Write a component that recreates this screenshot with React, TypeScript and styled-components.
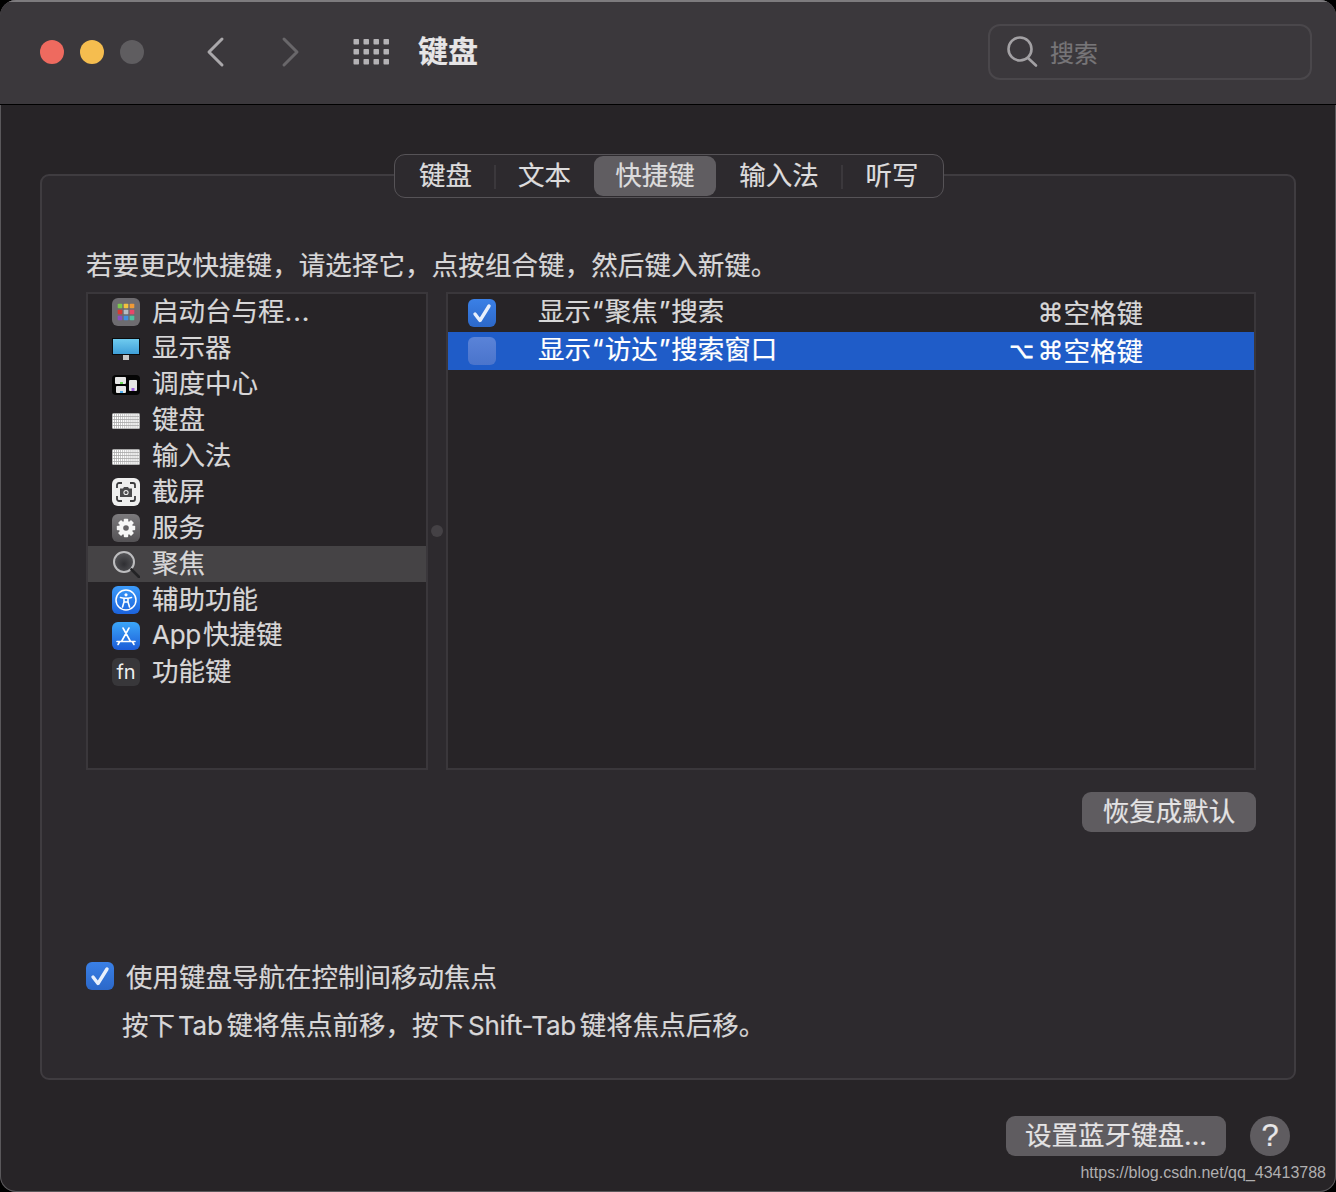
import React from "react";
import styled, { createGlobalStyle } from "styled-components";

const FONT = `Inter, "Noto Sans CJK SC", "Noto Sans", sans-serif`;

const Global = createGlobalStyle`
  html, body { margin: 0; padding: 0; background: #000; }
  body { font-family: ${FONT}; }
  * { box-sizing: border-box; }
`;

const Win = styled.div`
  position: relative;
  width: 1336px;
  height: 1192px;
  background: #272427;
  border-radius: 16px;
  overflow: hidden;
  box-shadow: inset 0 0 0 1px #5a585b;
  display: flex;
  flex-direction: column;
  -webkit-text-stroke: 0.2px;
`;
const TitleBar = styled.header`
  height: 105px;
  flex: none;
  background: #3b383c;
  border-top: 2px solid #7d7b7e;
  border-bottom: 1px solid #000;
  padding: 0 24px 3px 40px;
  display: flex;
  align-items: center;
`;
const Light = styled.span<{ $c: string }>`
  width: 24px;
  height: 24px;
  border-radius: 50%;
  background: ${(p) => p.$c};
  margin-right: 16px;
  flex: none;
`;
const NavBtn = styled.svg<{ $left: number; $dim?: boolean }>`
  width: 20px;
  height: 32px;
  flex: none;
  margin-left: ${(p) => p.$left}px;
  color: ${(p) => (p.$dim ? "#69676a" : "#aaa8ab")};
`;
const Grid = styled.svg`
  width: 36px;
  height: 26px;
  flex: none;
  margin-left: 53px;
`;
const Title = styled.h1`
  margin: 0 0 2px 29px;
  font-size: 30px;
  line-height: 40px;
  font-weight: 700;
  color: #e6e5e6;
  flex: 1;
`;
const Search = styled.div`
  width: 324px;
  height: 56px;
  border: 2px solid #4a474b;
  border-radius: 12px;
  padding-left: 15px;
  display: flex;
  align-items: center;
  gap: 11px;
  color: #777578;
  font-size: 24px;
`;
const Body = styled.main`
  flex: 1;
  padding: 69px 40px 0;
  display: flex;
  flex-direction: column;
`;
const Group = styled.section`
  height: 906px;
  background: #2d2a2e;
  border: 2px solid #3f3c40;
  border-radius: 9px;
  padding: 0 38px 0 44px;
  display: flex;
  flex-direction: column;
`;
const Tabs = styled.nav`
  align-self: center;
  margin: -22px 0 0 -4px;
  width: 550px;
  height: 44px;
  padding: 1px;
  border: 1px solid #565357;
  border-radius: 11px;
  background: #2d2a2e;
  display: grid;
  grid-template-columns: 99px 99px 122px 126px 100px;
  align-items: center;
`;
const Tab = styled.div<{ $active?: boolean; $sep?: boolean }>`
  height: 40px;
  padding-bottom: 2px;
  display: flex;
  align-items: center;
  justify-content: center;
  font-size: 26.5px;
  line-height: 38px;
  color: #dddcdd;
  border-radius: 9px;
  background: ${(p) => (p.$active ? "#605d61" : "transparent")};
  position: relative;
  &::after {
    content: "";
    display: ${(p) => (p.$sep ? "block" : "none")};
    position: absolute;
    right: -1px;
    top: 9px;
    width: 2px;
    height: 24px;
    background: #3b383c;
  }
`;
const Hint = styled.p`
  margin: 49px 0 9px;
  font-size: 26.6px;
  line-height: 36px;
  color: #d8d7d8;
  white-space: nowrap;
`;
const Lists = styled.div`
  position: relative;
  display: grid;
  grid-template-columns: 342px 810px;
  gap: 18px;
  height: 478px;
  flex: none;
`;
const Pane = styled.div`
  background: #272427;
  border: 2px solid #3a373b;
`;
const Handle = styled.span`
  position: absolute;
  left: 345px;
  top: 233px;
  width: 12px;
  height: 12px;
  border-radius: 50%;
  background: #444145;
`;
const CatRow = styled.div<{ $active?: boolean }>`
  height: 36px;
  padding-left: 24px;
  display: flex;
  align-items: center;
  gap: 12px;
  font-size: 26.5px;
  line-height: 36px;
  color: #d8d7d8;
  background: ${(p) => (p.$active ? "#454345" : "transparent")};
  white-space: nowrap;
  svg { flex: none; width: 28px; height: 28px; }
`;
const CatLabel = styled.span`
  margin-bottom: 3px;
`;
const Latin = styled.span<{ $l?: number; $r?: number }>`
  font-size: 26px;
  letter-spacing: -0.3px;
  margin: 0 ${(p) => p.$r ?? 4}px 0 ${(p) => p.$l ?? 3}px;
`;
const Dots = styled.span`
  letter-spacing: 1px;
`;
const KeyRow = styled.div<{ $active?: boolean }>`
  height: 38px;
  padding-left: 20px;
  display: flex;
  align-items: center;
  font-size: 26.5px;
  line-height: 36px;
  color: ${(p) => (p.$active ? "#fff" : "#d8d7d8")};
  background: ${(p) => (p.$active ? "#1f5cc8" : "transparent")};
`;
const RowLabel = styled.span`
  margin: 0 0 4px 42px;
  width: 605px;
  white-space: nowrap;
`;
const Quote = styled.span`
  margin: 0 1px;
`;
const Combo = styled.span`
  flex: none;
  width: 0;
  display: flex;
  justify-content: flex-end;
  align-items: center;
  white-space: nowrap;
`;
const Glyph = styled.span`
  font-family: "DejaVu Sans", sans-serif;
  font-size: 26px;
  font-weight: 400;
`;
const OptGlyph = styled.span`
  font-family: "DejaVu Sans", sans-serif;
  font-size: 21px;
  margin-right: 4px;
  -webkit-text-stroke: 0.8px;
`;
const Box = styled.span<{ $onSel?: boolean; $nudge?: boolean }>`
  width: 28px;
  height: 28px;
  flex: none;
  border-radius: 6px;
  display: flex;
  align-items: center;
  justify-content: center;
  margin-top: ${(p) => (p.$nudge ? 2 : 0)}px;
  background: ${(p) => (p.$onSel ? "linear-gradient(#5a83d8, #4a74cc)" : "linear-gradient(#3a80e6, #2c68c9)")};
  svg { width: 22px; height: 22px; }
`;
const RestoreRow = styled.div`
  display: flex;
  justify-content: flex-end;
  margin-top: 22px;
`;
const Button = styled.button<{ $w: number }>`
  width: ${(p) => p.$w}px;
  height: 40px;
  padding: 0 0 3px;
  border: 0;
  border-radius: 9px;
  background: #5f5c60;
  color: #e4e3e4;
  font: 400 26.5px/36px ${FONT};
  white-space: nowrap;
  -webkit-text-stroke: 0.2px;
`;
const CheckRow = styled.label`
  margin-top: 127px;
  display: flex;
  align-items: center;
  gap: 12px;
  height: 32px;
  font-size: 26.5px;
  color: #d8d7d8;
`;
const SubText = styled.p`
  margin: 16px 0 0 36px;
  font-size: 26.5px;
  line-height: 36px;
  color: #d8d7d8;
  white-space: nowrap;
`;
const Footer = styled.footer`
  margin-top: 36px;
  padding-right: 6px;
  display: flex;
  justify-content: flex-end;
  gap: 24px;
`;
const Help = styled.button`
  width: 40px;
  height: 40px;
  padding: 0;
  border: 0;
  border-radius: 50%;
  background: #5f5c60;
  color: #e8e7e8;
  font: 400 31px/40px "Liberation Sans", sans-serif;
`;
const Watermark = styled.span`
  position: absolute;
  right: 10px;
  bottom: 9px;
  font: 16px/20px "Liberation Sans", Arial, sans-serif;
  color: #b0afb0;
  -webkit-text-stroke: 0;
`;
const FnText = styled.text`
  font: 400 20px Inter, sans-serif;
  fill: #f0f0f0;
`;

const Check = () => (
  <svg viewBox="0 0 22 22" fill="none">
    <path d="M4 12l5 6.5L18 4" stroke="#e8f0fc" strokeWidth="3.4" strokeLinecap="round" strokeLinejoin="round" />
  </svg>
);

const IconLaunchpad = () => {
  const cs = ["#7cc94d", "#f2c23e", "#f09a36", "#d93a32", "#b7bcc2", "#e8476a", "#8a4fc2", "#3f8fe0", "#4fc2a0"];
  return (
    <svg viewBox="0 0 28 28">
      <rect width="28" height="28" rx="6" fill="#6e6c70" />
      {cs.map((c, i) => (
        <rect key={i} x={5.7 + (i % 3) * 6} y={5.7 + Math.floor(i / 3) * 6} width="4.6" height="4.6" rx="0.8" fill={c} />
      ))}
    </svg>
  );
};
const IconDisplay = () => (
  <svg viewBox="0 0 28 28">
    <defs>
      <linearGradient id="screen" x1="0" y1="0" x2="0" y2="1">
        <stop offset="0" stopColor="#6fcbef" />
        <stop offset="1" stopColor="#3f9fd8" />
      </linearGradient>
    </defs>
    <rect x="0" y="4" width="28" height="17" fill="#0b0b0c" />
    <rect x="1" y="5" width="26" height="15" fill="url(#screen)" />
    <rect x="11" y="21" width="6" height="5" fill="#c8c8c8" />
  </svg>
);
const IconMission = () => (
  <svg viewBox="0 0 28 28">
    <rect y="5" width="28" height="20" rx="4" fill="#050505" />
    <rect x="3" y="7" width="11" height="7" rx="1" fill="#e6e6e6" />
    <rect x="8" y="12" width="3" height="2" fill="#6fdc5a" />
    <rect x="4" y="16" width="10" height="7" rx="1" fill="#e6e6e6" />
    <rect x="8" y="21" width="3" height="2" fill="#4fb0f0" />
    <rect x="17" y="10" width="8" height="11" rx="1" fill="#e6e6e6" />
    <rect x="19.5" y="18" width="3" height="3" fill="#a066e0" />
  </svg>
);
const IconKeyboard = () => {
  const keys = [];
  for (let r = 0; r < 5; r++)
    for (let c = 0; c < 13; c++)
      keys.push(<rect key={r + "-" + c} x={0.8 + c * 2.05} y={8 + r * 3} width="1.4" height="2.2" fill="#ffffff" />);
  return (
    <svg viewBox="0 0 28 28">
      <rect y="7" width="28" height="16" rx="1.5" fill="#a8a8a8" />
      {keys}
    </svg>
  );
};
const IconScreenshot = () => (
  <svg viewBox="0 0 28 28">
    <rect width="28" height="28" rx="6" fill="#efefef" />
    <path d="M5 10V7a2 2 0 0 1 2-2h3M18 5h3a2 2 0 0 1 2 2v3M23 18v3a2 2 0 0 1-2 2h-3M10 23H7a2 2 0 0 1-2-2v-3" fill="none" stroke="#3c3c3e" strokeWidth="1.8" />
    <path d="M8 10.5h3l1-1.6h4l1 1.6h3V19H8z" fill="#4a4a4c" />
    <circle cx="14" cy="14.5" r="2.6" fill="#efefef" />
    <circle cx="14" cy="14.5" r="1.5" fill="#4a4a4c" />
  </svg>
);
const IconGear = () => {
  const teeth = [0, 45, 90, 135, 180, 225, 270, 315];
  return (
    <svg viewBox="0 0 28 28">
      <defs>
        <linearGradient id="gearBg" x1="0" y1="0" x2="0" y2="1">
          <stop offset="0" stopColor="#7c7a7d" />
          <stop offset="1" stopColor="#545255" />
        </linearGradient>
      </defs>
      <rect width="28" height="28" rx="6" fill="url(#gearBg)" />
      {teeth.map((a) => (
        <rect key={a} x="11.8" y="4.8" width="4.4" height="5" rx="0.8" fill="#f6f6f6" transform={`rotate(${a} 14 14)`} />
      ))}
      <circle cx="14" cy="14" r="7" fill="#f6f6f6" />
      <circle cx="14" cy="14" r="2.8" fill="#656366" />
    </svg>
  );
};
const IconSpot = () => (
  <svg viewBox="0 0 28 28">
    <defs>
      <radialGradient id="glass" cx="0.5" cy="0.6" r="0.6">
        <stop offset="0" stopColor="#2f2f33" />
        <stop offset="1" stopColor="#58585b" />
      </radialGradient>
    </defs>
    <circle cx="12" cy="12" r="10" fill="url(#glass)" stroke="#bdbdbf" strokeWidth="2" />
    <path d="M19.5 19.5 27 27" stroke="#232325" strokeWidth="2.6" strokeLinecap="round" />
  </svg>
);
const IconAccess = () => (
  <svg viewBox="0 0 28 28">
    <defs>
      <linearGradient id="blueBg" x1="0" y1="0" x2="0" y2="1">
        <stop offset="0" stopColor="#3c9bfa" />
        <stop offset="1" stopColor="#1c63dc" />
      </linearGradient>
    </defs>
    <rect width="28" height="28" rx="6" fill="url(#blueBg)" />
    <circle cx="14" cy="14" r="10" fill="none" stroke="#fff" strokeWidth="1.5" />
    <circle cx="14" cy="8.8" r="1.6" fill="#fff" />
    <path d="M8.5 11.5 12 12.3V16l-1.5 5M19.5 11.5 16 12.3V16l1.5 5M12 12.3h4M12 16h4" fill="none" stroke="#fff" strokeWidth="1.6" strokeLinecap="round" />
  </svg>
);
const IconStore = () => (
  <svg viewBox="0 0 28 28">
    <defs>
      <linearGradient id="storeBg" x1="0" y1="0" x2="0" y2="1">
        <stop offset="0" stopColor="#3ba6f8" />
        <stop offset="1" stopColor="#1c5cd8" />
      </linearGradient>
    </defs>
    <rect width="28" height="28" rx="6" fill="url(#storeBg)" />
    <path d="M11 6l7.5 13.5M17 6 9.5 19.5M5 19.5h18M6 22.5l1.5-2.5M22 22.5 20.5 20" fill="none" stroke="#fff" strokeWidth="1.6" strokeLinecap="round" />
  </svg>
);
const IconFn = () => (
  <svg viewBox="0 0 28 28">
    <rect width="28" height="28" rx="6" fill="#38373a" />
    <FnText x="14" y="21" textAnchor="middle">fn</FnText>
  </svg>
);

const cats: [React.ReactNode, React.ReactNode][] = [
  [<IconLaunchpad />, <>启动台与程<Dots>...</Dots></>],
  [<IconDisplay />, "显示器"],
  [<IconMission />, "调度中心"],
  [<IconKeyboard />, "键盘"],
  [<IconKeyboard />, "输入法"],
  [<IconScreenshot />, "截屏"],
  [<IconGear />, "服务"],
  [<IconSpot />, "聚焦"],
  [<IconAccess />, "辅助功能"],
  [<IconStore />, <><Latin $l={0} $r={2}>App</Latin>快捷键</>],
  [<IconFn />, "功能键"],
];

export default function App() {
  return (
    <>
      <Global />
      <Win>
        <TitleBar>
          <Light $c="#ee6a5f" />
          <Light $c="#f5bd4f" />
          <Light $c="#5f5d60" />
          <NavBtn $left={46} viewBox="0 0 20 32" fill="none" stroke="currentColor" strokeWidth="3" strokeLinecap="round" strokeLinejoin="round">
            <path d="M16 3 3 16l13 13" />
          </NavBtn>
          <NavBtn $left={54} $dim viewBox="0 0 20 32" fill="none" stroke="currentColor" strokeWidth="3" strokeLinecap="round" strokeLinejoin="round">
            <path d="M4 3l13 13L4 29" />
          </NavBtn>
          <Grid viewBox="0 0 36 26" fill="#b4b2b5">
            {[0, 1, 2].flatMap((r) =>
              [0, 1, 2, 3].map((c) => <rect key={r + "" + c} x={c * 10 + 0.5} y={r * 10} width="5.5" height="5.5" rx="0.8" />)
            )}
          </Grid>
          <Title>键盘</Title>
          <Search>
            <svg width="34" height="34" viewBox="0 0 34 34" fill="none" stroke="#a3a1a4" strokeWidth="2.6" strokeLinecap="round">
              <circle cx="15" cy="14" r="11.5" />
              <path d="M23 23l8 7.5" />
            </svg>
            搜索
          </Search>
        </TitleBar>
        <Body>
          <Group>
            <Tabs>
              <Tab $sep>键盘</Tab>
              <Tab>文本</Tab>
              <Tab $active>快捷键</Tab>
              <Tab $sep>输入法</Tab>
              <Tab>听写</Tab>
            </Tabs>
            <Hint>若要更改快捷键，请选择它，点按组合键，然后键入新键。</Hint>
            <Lists>
              <Pane>
                {cats.map(([icon, label], i) => (
                  <CatRow key={i} $active={i === 7}>
                    {icon}
                    <CatLabel>{label}</CatLabel>
                  </CatRow>
                ))}
              </Pane>
              <Handle />
              <Pane>
                <KeyRow>
                  <Box>
                    <Check />
                  </Box>
                  <RowLabel>显示<Quote>“</Quote>聚焦<Quote>”</Quote>搜索</RowLabel>
                  <Combo>
                    <Glyph>⌘</Glyph>空格键
                  </Combo>
                </KeyRow>
                <KeyRow $active>
                  <Box $onSel />
                  <RowLabel>显示<Quote>“</Quote>访达<Quote>”</Quote>搜索窗口</RowLabel>
                  <Combo>
                    <OptGlyph>⌥</OptGlyph>
                    <Glyph>⌘</Glyph>空格键
                  </Combo>
                </KeyRow>
              </Pane>
            </Lists>
            <RestoreRow>
              <Button $w={174}>恢复成默认</Button>
            </RestoreRow>
            <CheckRow>
              <Box $nudge>
                <Check />
              </Box>
              使用键盘导航在控制间移动焦点
            </CheckRow>
            <SubText>按下<Latin>Tab</Latin>键将焦点前移，按下<Latin>Shift-Tab</Latin>键将焦点后移。</SubText>
          </Group>
          <Footer>
            <Button $w={220}>设置蓝牙键盘...</Button>
            <Help>?</Help>
          </Footer>
        </Body>
        <Watermark>https://blog.csdn.net/qq_43413788</Watermark>
      </Win>
    </>
  );
}
